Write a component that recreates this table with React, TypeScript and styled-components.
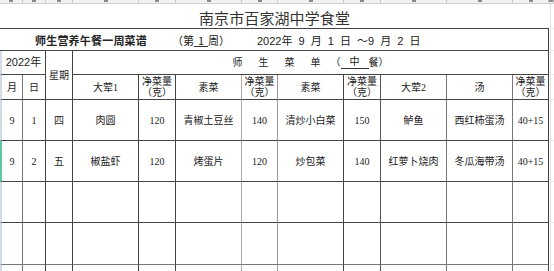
import { styled, createGlobalStyle } from 'styled-components';

const GlobalStyle = createGlobalStyle`
  html, body {
    margin: 0;
    padding: 0;
    background: #fff;
    overflow: hidden;
  }
`;

const COLS = [23, 23, 27, 66, 37, 66, 36, 66, 37, 66, 66, 36];
const LINE = ['#777', '#444', '#444', '#444', '#444', '#aaa', '#999', '#444', '#555', '#777', '#777', '#444'];
const TEMPLATE = COLS.map((w) => `${w}px`).join(' ') + ' 1fr';

const HEADS: [string, string?][] = [
  ['大荤1'],
  ['净菜量', '（克）'],
  ['素菜'],
  ['净菜量', '（克）'],
  ['素菜'],
  ['净菜量', '（克）'],
  ['大荤2'],
  ['汤'],
  ['净菜量', '（克）'],
];

const MENU = [
  ['9', '1', '四', '肉圆', '120', '青椒土豆丝', '140', '清炒小白菜', '150', '鲈鱼', '西红柿蛋汤', '40+15'],
  ['9', '2', '五', '椒盐虾', '120', '烤蛋片', '120', '炒包菜', '140', '红萝卜烧肉', '冬瓜海带汤', '40+15'],
];

const EMPTY_ROWS = [
  { height: 41, bottom: '#444' },
  { height: 42, bottom: '#777' },
  { height: 10, bottom: '#aaa' },
];

const App = () => (
  <Page>
    <GlobalStyle />
    <ColumnStrip>
      {[...COLS, 0].map((_, i) => (
        <ColHead key={i}>
          <Tail />
        </ColHead>
      ))}
    </ColumnStrip>
    <Sheet>
      <TitleCell>南京市百家湖中学食堂</TitleCell>
      <Spill />

      <SubtitleCell>
        <strong>师生营养午餐一周菜谱</strong>
        <span>
          （第<Blank $pad={4}>1</Blank>周）
        </span>
        <DateRange>2022年 9 月 1 日 ～9 月 2 日</DateRange>
      </SubtitleCell>
      <Spill />

      <Cell $span={2} $line={LINE[1]} $edge="#d3dbe5" $sans>
        2022年
      </Cell>
      <Cell $rows={2} $line={LINE[2]}>
        星期
      </Cell>
      <Cell $span={9} $line={LINE[11]} $inline>
        <Spaced>师生菜</Spaced>
        <span>单</span>
        <Paren>（</Paren>
        <Blank $pad={9}>中</Blank>
        <span>餐）</span>
      </Cell>
      <Spill />

      <Cell $line={LINE[0]} $edge="#d3dbe5">
        月
      </Cell>
      <Cell $line={LINE[1]}>日</Cell>
      {HEADS.map(([a, b], i) => (
        <Cell key={i} $line={LINE[i + 3]}>
          <span>{a}</span>
          {b && <span>{b}</span>}
        </Cell>
      ))}
      <Spill />

      {MENU.map((row, r) => [
        ...row.map((v, i) => (
          <Cell
            key={`${r}-${i}`}
            $line={LINE[i]}
            $edge={i === 0 ? (r === 1 ? '#5fc7a2' : '#d3dbe5') : undefined}
            $height={41}
          >
            {v}
          </Cell>
        )),
        <Spill key={`${r}-s`} />,
      ])}

      {EMPTY_ROWS.map((er, r) => [
        ...COLS.map((_, i) => (
          <Cell
            key={`e${r}-${i}`}
            $line={LINE[i]}
            $edge={i === 0 ? '#d3dbe5' : undefined}
            $bottom={er.bottom}
            $height={er.height}
          />
        )),
        <Spill key={`e${r}-s`} />,
      ])}
    </Sheet>
  </Page>
);

const Page = styled.div`
  width: 554px;
  height: 271px;
  overflow: hidden;
  font-family: 'Liberation Serif', 'Noto Sans CJK SC', serif;
  color: #222;
`;

const ColumnStrip = styled.div`
  display: grid;
  grid-template-columns: ${TEMPLATE};
  height: 4px;
  background: #f1f1f1;
  border-bottom: 1px solid #cfcfcf;
  box-sizing: border-box;
`;

const ColHead = styled.div`
  display: flex;
  justify-content: center;
  border-right: 1px solid #c8c8c8;
`;

const Tail = styled.i`
  width: 4px;
  height: 2px;
  background: #8a8a8a;
`;

const Sheet = styled.div`
  display: grid;
  grid-template-columns: ${TEMPLATE};
  grid-template-rows: 25px 22px 24px 25px;
`;

const TitleCell = styled.div`
  grid-column: 1 / span 12;
  display: flex;
  align-items: center;
  justify-content: center;
  padding-top: 3px;
  border-bottom: 1px solid #444;
  font-family: 'Noto Sans CJK SC', sans-serif;
  font-size: 15px;
  letter-spacing: 0.1px;
  color: #333;
`;

const SubtitleCell = styled.div`
  grid-column: 1 / span 12;
  display: grid;
  grid-template-columns: 137px 85px auto;
  align-items: center;
  padding-left: 35px;
  border-right: 1px solid #444;
  border-bottom: 1px solid #444;
  font-family: 'Noto Sans CJK SC', sans-serif;
  font-size: 11px;

  strong {
    font-weight: 700;
    letter-spacing: 0.2px;
  }
`;

const DateRange = styled.span`
  font-family: 'Liberation Sans', 'Noto Sans CJK SC', sans-serif;
  word-spacing: 3px;
`;

const Blank = styled.span<{ $pad: number }>`
  display: inline-block;
  padding: 0 ${(p) => p.$pad}px;
  line-height: 12px;
  border-bottom: 1px solid #333;
`;

const Spaced = styled.span`
  letter-spacing: 16px;
`;

const Paren = styled.span`
  margin-left: 10px;
`;

const Cell = styled.div<{
  $span?: number;
  $rows?: number;
  $line: string;
  $edge?: string;
  $bottom?: string;
  $height?: number;
  $sans?: boolean;
  $inline?: boolean;
}>`
  grid-column: span ${(p) => p.$span ?? 1};
  grid-row: span ${(p) => p.$rows ?? 1};
  height: ${(p) => (p.$height ? `${p.$height}px` : 'auto')};
  box-sizing: border-box;
  display: flex;
  flex-direction: ${(p) => (p.$inline ? 'row' : 'column')};
  align-items: center;
  justify-content: center;
  text-align: center;
  border-right: 1px solid ${(p) => p.$line};
  border-bottom: 1px solid ${(p) => p.$bottom ?? '#444'};
  border-left: ${(p) => (p.$edge ? `2px solid ${p.$edge}` : 'none')};
  font-family: ${(p) =>
    p.$sans ? "'Liberation Sans', 'Noto Sans CJK SC', sans-serif" : 'inherit'};
  font-size: ${(p) => (p.$sans ? '11px' : '10px')};
  line-height: 11px;
  white-space: nowrap;
  overflow: hidden;
`;

const Spill = styled.div`
  margin-left: 1px;
  border-left: 1px solid #e3e3e3;
  border-bottom: 1px solid #ececec;
`;

export default App;
